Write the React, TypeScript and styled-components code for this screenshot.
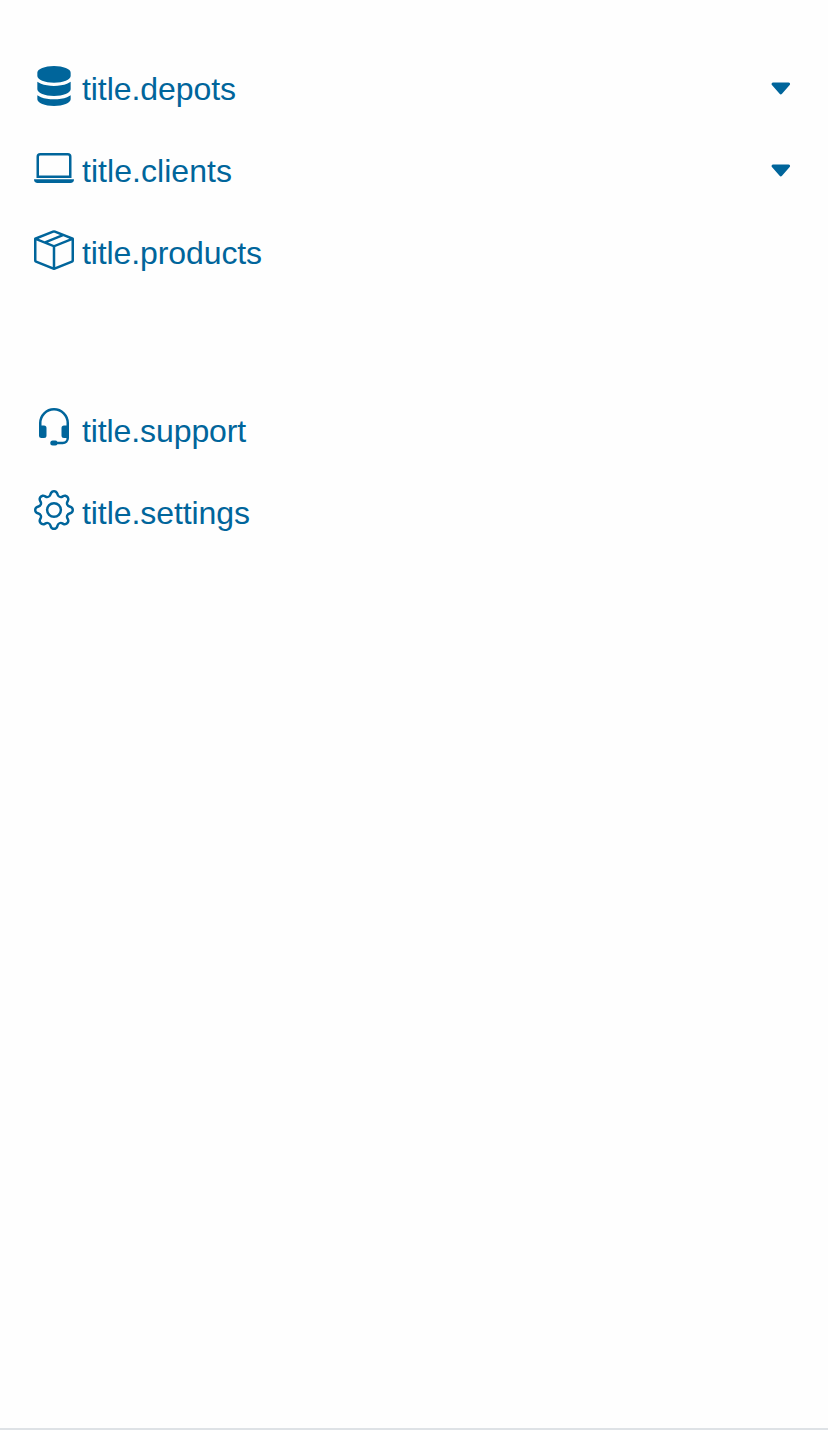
import React from 'react';
import styled, { createGlobalStyle } from 'styled-components';
import { BsServer, BsLaptop, BsBoxSeam, BsHeadset, BsGear, BsCaretDownFill } from 'react-icons/bs';

const GlobalStyle = createGlobalStyle`
  * { box-sizing: border-box; }
  body { margin: 0; background: #fefefe; }
`;

const Sidebar = styled.nav`
  height: 1430px;
  padding: 48px 32px 0;
  border-bottom: 2px solid #dee2e6;
  background: #fefefe;
  color: #00659b;
  font-family: "Liberation Sans", Arial, sans-serif;
  font-size: 32px;
`;

const Group = styled.ul<{ $gap?: number }>`
  list-style: none;
  padding: 0;
  margin: ${({ $gap = 0 }) => $gap}px 0 0;
`;

const Item = styled.li`
  height: 82px;
  padding: 16px 2px 0;
  display: flex;
  align-items: flex-start;
`;

const ItemIcon = styled.span`
  width: 40px;
  height: 40px;
  margin: 2px 8px 0 0;
  flex: none;
  svg { display: block; width: 40px; height: 40px; }
`;

const Label = styled.span<{ $tracking: number }>`
  flex: 1;
  line-height: 50px;
  letter-spacing: ${({ $tracking }) => $tracking}px;
`;

const Caret = styled.span`
  margin: 12px 0.4px 0 0;
  svg { display: block; width: 25.6px; height: 25.6px; }
`;

interface NavItemProps {
  icon: React.ReactNode;
  label: string;
  tracking: number;
  expandable?: boolean;
}

function NavItem({ icon, label, tracking, expandable }: NavItemProps) {
  return (
    <Item>
      <ItemIcon>{icon}</ItemIcon>
      <Label $tracking={tracking}>{label}</Label>
      {expandable && <Caret><BsCaretDownFill /></Caret>}
    </Item>
  );
}

export default function App() {
  return (
    <>
      <GlobalStyle />
      <Sidebar>
        <Group>
          <NavItem icon={<BsServer />} label="title.depots" tracking={-0.065} expandable />
          <NavItem icon={<BsLaptop />} label="title.clients" tracking={0.045} expandable />
          <NavItem icon={<BsBoxSeam />} label="title.products" tracking={-0.1} />
        </Group>
        <Group $gap={96}>
          <NavItem icon={<BsHeadset />} label="title.support" tracking={-0.1} />
          <NavItem icon={<BsGear />} label="title.settings" tracking={-0.075} />
        </Group>
      </Sidebar>
    </>
  );
}
